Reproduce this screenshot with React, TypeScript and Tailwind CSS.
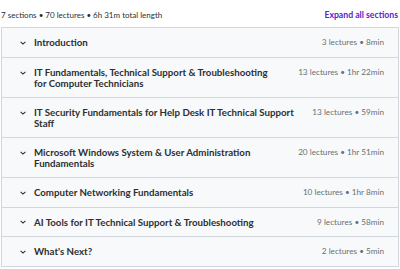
import React from 'react';

const sections = [
  { title: 'Introduction', stats: '3 lectures • 8min' },
  { title: 'IT Fundamentals, Technical Support & Troubleshooting for Computer Technicians', stats: '13 lectures • 1hr 22min' },
  { title: 'IT Security Fundamentals for Help Desk IT Technical Support Staff', stats: '13 lectures • 59min' },
  { title: 'Microsoft Windows System & User Administration Fundamentals', stats: '20 lectures • 1hr 51min' },
  { title: 'Computer Networking Fundamentals', stats: '10 lectures • 1hr 8min' },
  { title: 'AI Tools for IT Technical Support & Troubleshooting', stats: '9 lectures • 58min' },
  { title: "What's Next?", stats: '2 lectures • 5min' },
];

function Chevron() {
  return (
    <svg width="8" height="8" viewBox="0 0 8 8" className="shrink-0 mt-[1.5px]">
      <path d="M1.6 2.8 L4 5.1 L6.4 2.8" fill="none" stroke="#2d2f31" strokeWidth="1.1" />
    </svg>
  );
}

export default function App() {
  return (
    <div className="w-[400px] h-[269px] bg-white text-[#2d2f31] font-['Lato','Liberation_Sans',sans-serif] overflow-hidden">
      <div className="flex items-center justify-between h-[27px] pl-[1px] pr-[2px] pt-[3px]">
        <span className="text-[8px]">7 sections • 70 lectures • 6h 31m total length</span>
        <button className="text-[8.7px] font-bold text-[#5624d0]">Expand all sections</button>
      </div>
      <div className="mx-[1px] border border-[#d1d7dc]">
        {sections.map((s, i) => (
          <div
            key={i}
            className={`flex items-center min-h-[29px] py-[9px] pl-[17px] pr-[14px] bg-[#f7f9fa] ${i > 0 ? 'border-t border-[#d1d7dc]' : ''}`}
          >
            <div className="flex items-start flex-1 gap-[7px] min-w-0">
              <Chevron />
              <span className="text-[9.7px] leading-[10.5px] font-bold">{s.title}</span>
            </div>
            <span className="self-start text-[8.2px] leading-[10.5px] text-[#6a6f73] ml-[16px] whitespace-nowrap">{s.stats}</span>
          </div>
        ))}
      </div>
    </div>
  );
}
